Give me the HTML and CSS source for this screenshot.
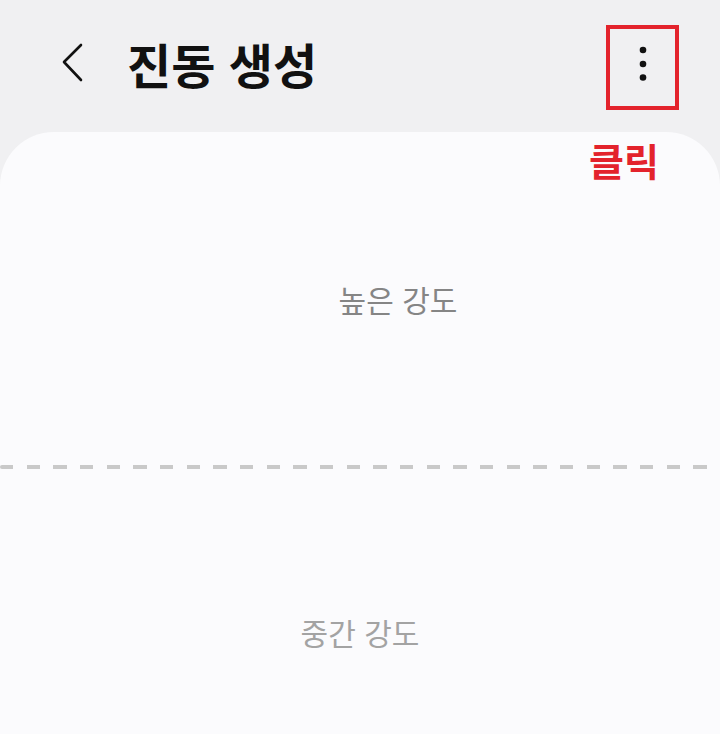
FILE: index.html
```html
<!DOCTYPE html>
<html lang="ko">
<head>
  <meta charset="UTF-8" />
  <meta name="viewport" content="width=device-width, initial-scale=1.0"/>
  <title>진동 생성</title>
  <link rel="stylesheet" href="styles.css">
</head>
<body>

  <header class="top-bar">
    <button class="back-btn" aria-label="뒤로">
      <svg width="22" height="40" viewBox="0 0 22 40">
        <path d="M19 2 L2 19 L19 37" fill="none" stroke="#111" stroke-width="2.6" stroke-linecap="round" stroke-linejoin="round"/>
      </svg>
    </button>
    <h1 class="title">진동 생성</h1>
    <button class="more-btn" aria-label="더보기">
      <svg width="8" height="36" viewBox="0 0 8 36">
        <circle cx="4" cy="4" r="3.3" fill="#111"/>
        <circle cx="4" cy="18" r="3.3" fill="#111"/>
        <circle cx="4" cy="31.5" r="3.3" fill="#111"/>
      </svg>
    </button>
    <span class="click-note">클릭</span>
  </header>

  <main class="card">
    <section class="level">
      <span class="level-label high">높은 강도</span>
    </section>
    <div class="divider"></div>
    <section class="level last">
      <span class="level-label mid">중간 강도</span>
    </section>
  </main>

</body>
</html>
```

FILE: styles.css
```css
html, body {
  margin: 0;
  padding: 0;
}

body {
  font-family: "Noto Sans CJK KR", "Noto Sans", sans-serif;
  background: #f0f0f2;
  height: 734px;
  overflow: hidden;
}

.top-bar {
  position: relative;
  display: flex;
  align-items: center;
  height: 126px;
  padding: 0 41px 0 62px;
}

.back-btn,
.more-btn {
  background: none;
  border: none;
  padding: 0;
  cursor: pointer;
}

.back-btn {
  display: flex;
  width: 22px;
  height: 40px;
}

.title {
  margin: 0 0 0 43px;
  font-size: 48px;
  font-weight: 700;
  color: #111;
  line-height: 1;
}

.more-btn {
  margin: 9px 0 0 auto;
  width: 73px;
  height: 85px;
  box-sizing: border-box;
  border: 4px solid #e3232c;
  padding-bottom: 8px;
  display: flex;
  align-items: center;
  justify-content: center;
}

.click-note {
  position: absolute;
  left: 589px;
  top: 141px;
  font-size: 38px;
  font-weight: 700;
  line-height: 1;
  color: #e3232c;
  z-index: 2;
}

.card {
  margin-top: 6px;
  background: #fbfbfd;
  border-radius: 54px 54px 0 0;
}

.level {
  height: 333px;
  display: flex;
  align-items: center;
  justify-content: center;
}

.level.last {
  height: 265px;
  align-items: flex-start;
  padding-top: 148px;
  box-sizing: border-box;
}

.level-label {
  font-size: 30px;
  line-height: 1;
}

.level-label.high {
  color: #858585;
  margin-left: 76px;
}

.level-label.mid {
  color: #a3a3a3;
}

.divider {
  height: 4px;
  background: repeating-linear-gradient(
    to right,
    #c9c9c9 0,
    #c9c9c9 13.3px,
    transparent 13.3px,
    transparent 26.67px
  );
  border-radius: 2px;
}
```
